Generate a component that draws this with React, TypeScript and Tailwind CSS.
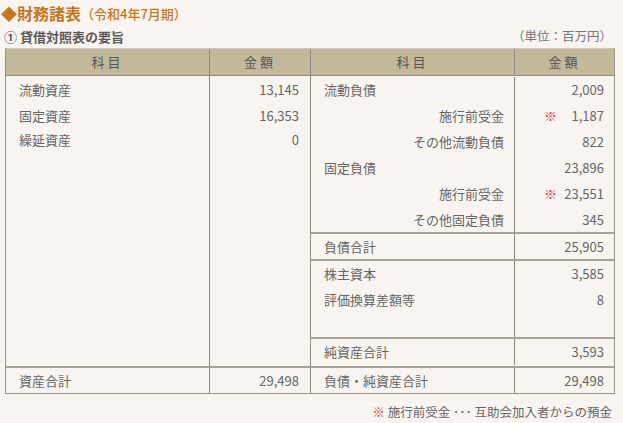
import React from "react";

const font = {
  fontFamily: '"Noto Sans CJK JP", "Noto Sans", sans-serif',
};

interface LineProps {
  label: string;
  amount: string;
  indent?: boolean;
  note?: boolean;
}

// one line inside a right-hand block: label cell + amount cell
const Line: React.FC<LineProps> = ({ label, amount, indent, note }) => (
  <div className="flex h-[26px] items-center">
    <div
      className={`w-[204px] border-r border-[#8f8a7e] h-full flex items-center ${
        indent ? "justify-end pr-[10px]" : "pl-[13px]"
      }`}
    >
      {label}
    </div>
    <div className="flex h-full flex-1 items-center justify-end pr-[10px]">
      {note && <span className="mr-auto pl-[29px] text-[#d23a44]">※</span>}
      {amount}
    </div>
  </div>
);

const App: React.FC = () => {
  return (
    <div
      className="h-[423px] w-[623px] bg-[#f8f5f0] text-[#666] overflow-hidden"
      style={font}
    >
      <div className="flex h-[21px] items-end pl-[1px]">
        <span className="text-[16px] font-bold leading-none text-[#c6761f]">
          ◆財務諸表
        </span>
        <span className="mb-[1px] text-[13px] font-medium leading-none text-[#c6761f]">
          （令和4年7月期）
        </span>
      </div>
      <div className="mt-[9px] flex items-center justify-between pl-[4px] pr-[11px] leading-none">
        <span className="text-[13px] font-bold text-[#5a5a5a]">① 貸借対照表の要旨</span>
        <span className="text-[12.5px] text-[#777]">（単位：百万円）</span>
      </div>

      <div className="ml-[5px] mt-[5px] w-[610px] border border-[#9a9488] border-t-[#c9c5bc] text-[13px]">
        {/* header */}
        <div className="flex h-[27px] items-center bg-[#c1b99a] text-[#555] border-b border-[#8f8a7e]">
          <div className="flex h-full w-[204px] items-center justify-center border-r border-[#8f8a7e] tracking-[3px]">
            科目
          </div>
          <div className="flex h-full w-[101px] items-center justify-center border-r border-[#8f8a7e] tracking-[3px]">
            金額
          </div>
          <div className="flex h-full w-[204px] items-center justify-center border-r border-[#8f8a7e] tracking-[3px]">
            科目
          </div>
          <div className="flex h-full flex-1 items-center justify-center tracking-[3px]">
            金額
          </div>
        </div>

        {/* body */}
        <div className="flex h-[290px]">
          <div className="flex w-[305px] border-r border-[#8f8a7e]">
            <div className="w-[204px] border-r border-[#8f8a7e] pl-[13px] pt-[1px]">
              <div className="flex h-[26px] items-center">流動資産</div>
              <div className="flex h-[26px] items-center">固定資産</div>
              <div className="flex h-[22px] items-center">繰延資産</div>
            </div>
            <div className="flex-1 pr-[11px] pt-[1px] text-right">
              <div className="flex h-[26px] items-center justify-end">13,145</div>
              <div className="flex h-[26px] items-center justify-end">16,353</div>
              <div className="flex h-[22px] items-center justify-end">0</div>
            </div>
          </div>
          <div className="flex flex-1 flex-col">
            <div className="h-[158px] border-b-2 border-[#a8a398] pt-[1px]">
              <Line label="流動負債" amount="2,009" />
              <Line label="施行前受金" amount="1,187" indent note />
              <Line label="その他流動負債" amount="822" indent />
              <Line label="固定負債" amount="23,896" />
              <Line label="施行前受金" amount="23,551" indent note />
              <Line label="その他固定負債" amount="345" indent />
            </div>
            <div className="h-[27px] border-b-2 border-[#a8a398]">
              <Line label="負債合計" amount="25,905" />
            </div>
            <div className="flex h-[78px] border-b-2 border-[#a8a398]">
              <div className="w-[204px] border-r border-[#8f8a7e] pl-[13px]">
                <div className="flex h-[26px] items-center">株主資本</div>
                <div className="flex h-[26px] items-center">評価換算差額等</div>
              </div>
              <div className="flex-1 pr-[10px]">
                <div className="flex h-[26px] items-center justify-end">3,585</div>
                <div className="flex h-[26px] items-center justify-end">8</div>
              </div>
            </div>
            <div className="flex-1">
              <Line label="純資産合計" amount="3,593" />
            </div>
          </div>
        </div>

        {/* totals */}
        <div className="flex h-[27px] border-t-2 border-[#a8a398]">
          <div className="flex w-[204px] items-center border-r border-[#8f8a7e] pl-[13px]">
            資産合計
          </div>
          <div className="flex w-[101px] items-center justify-end border-r border-[#8f8a7e] pr-[11px]">
            29,498
          </div>
          <div className="flex w-[204px] items-center border-r border-[#8f8a7e] pl-[13px]">
            負債・純資産合計
          </div>
          <div className="flex flex-1 items-center justify-end pr-[10px]">
            29,498
          </div>
        </div>
      </div>

      <div className="mt-[9px] pr-[11px] text-right text-[12.5px] text-[#666]">
        <span className="text-[#d23a44]">※</span> 施行前受金 ･･･ 互助会加入者からの預金
      </div>
    </div>
  );
};

export default App;
